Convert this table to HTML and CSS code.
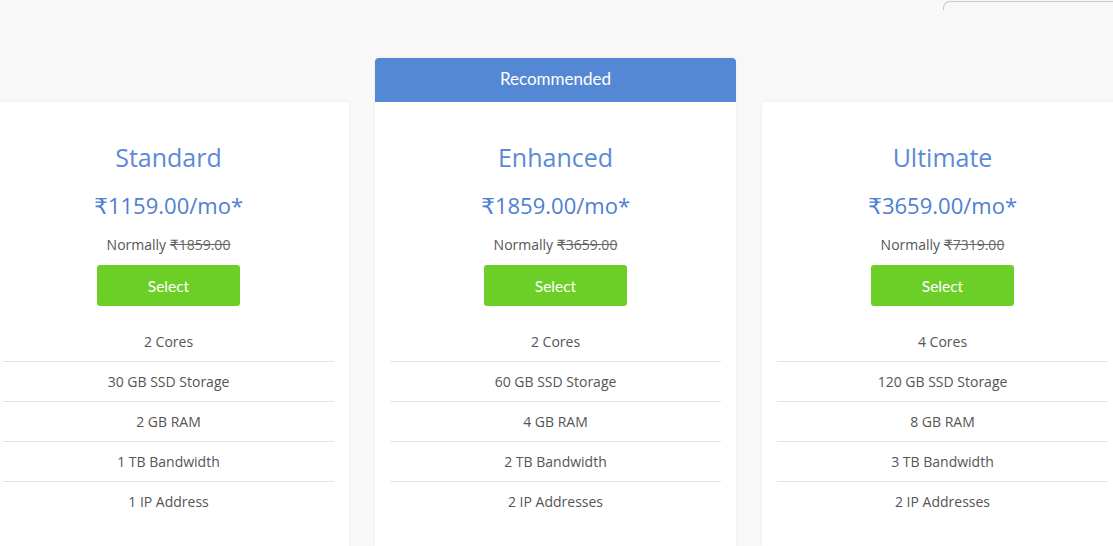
FILE: index.html
```html
<!DOCTYPE html>
<html lang="en">
<head>
<meta charset="utf-8">
<title>Plans</title>
<link rel="stylesheet" href="styles.css">
</head>
<body>
<div class="corner-box"></div>
<div class="plans">
  <div class="plan">
    <div class="plan-body">
      <h2 class="plan-name">Standard</h2>
      <div class="plan-price">₹1159.00/mo*</div>
      <div class="plan-normal">Normally <s>₹1859.00</s></div>
      <button class="select-btn">Select</button>
      <ul class="features">
        <li>2 Cores</li>
        <li>30 GB SSD Storage</li>
        <li>2 GB RAM</li>
        <li>1 TB Bandwidth</li>
        <li>1 IP Address</li>
      </ul>
    </div>
  </div>
  <div class="plan plan-featured">
    <div class="plan-banner">Recommended</div>
    <div class="plan-body">
      <h2 class="plan-name">Enhanced</h2>
      <div class="plan-price">₹1859.00/mo*</div>
      <div class="plan-normal">Normally <s>₹3659.00</s></div>
      <button class="select-btn">Select</button>
      <ul class="features">
        <li>2 Cores</li>
        <li>60 GB SSD Storage</li>
        <li>4 GB RAM</li>
        <li>2 TB Bandwidth</li>
        <li>2 IP Addresses</li>
      </ul>
    </div>
  </div>
  <div class="plan">
    <div class="plan-body">
      <h2 class="plan-name">Ultimate</h2>
      <div class="plan-price">₹3659.00/mo*</div>
      <div class="plan-normal">Normally <s>₹7319.00</s></div>
      <button class="select-btn">Select</button>
      <ul class="features">
        <li>4 Cores</li>
        <li>120 GB SSD Storage</li>
        <li>8 GB RAM</li>
        <li>3 TB Bandwidth</li>
        <li>2 IP Addresses</li>
      </ul>
    </div>
  </div>
</div>
</body>
</html>
```

FILE: styles.css
```css
html, body {
  margin: 0;
  padding: 0;
  background: #f8f8f8;
  overflow: hidden;
  height: 546px;
}
body {
  font-family: "Open Sans", "DejaVu Sans", sans-serif;
  color: #555;
  position: relative;
}
.corner-box {
  position: absolute;
  top: 1px;
  left: 943px;
  width: 200px;
  height: 8px;
  border-top: 1px solid #c8c8c8;
  border-left: 1px solid #c8c8c8;
  border-top-left-radius: 7px;
}
.plans {
  display: flex;
  gap: 26px;
  margin-left: -12px;
  padding-top: 58px;
  align-items: flex-start;
}
.plan {
  flex: 0 0 361px;
  margin-top: 44px;
  background: #fff;
  border-radius: 4px 4px 0 0;
  box-shadow: 0 0 3px rgba(0,0,0,0.06);
  height: 444px;
}
.plan-featured {
  margin-top: 0;
  height: 488px;
}
.plan-banner {
  height: 44px;
  background: #5588d4;
  color: #fff;
  border-radius: 4px 4px 0 0;
  font-family: Lato, "Open Sans", sans-serif;
  font-size: 17px;
  line-height: 42px;
  text-align: center;
}
.plan-body {
  padding: 37px 15px 0;
  text-align: center;
}
.plan-name {
  margin: 0;
  font-weight: 400;
  font-size: 25px;
  line-height: 36px;
  color: #5b8ad6;
}
.plan-price {
  margin-top: 15px;
  font-size: 22px;
  line-height: 30px;
  color: #4e80d1;
}
.plan-normal {
  margin-top: 15px;
  font-size: 14px;
  line-height: 20px;
  color: #555;
}
.plan-normal s {
  color: #666;
}
.select-btn {
  display: block;
  margin: 10px auto 0;
  width: 143px;
  height: 41px;
  border: 0;
  border-radius: 3px;
  background: #6ccf27;
  color: #fff;
  font-family: Lato, "Open Sans", sans-serif;
  font-size: 15.5px;
  line-height: 38px;
  cursor: pointer;
}
.features {
  list-style: none;
  margin: 16px 0 0;
  padding: 0;
}
.features li {
  height: 40px;
  line-height: 40px;
  font-size: 14px;
  color: #555;
  border-bottom: 1px solid #e4e4e4;
  box-sizing: border-box;
}
.features li:first-child {
  line-height: 39px;
}
.features li:last-child {
  border-bottom: 0;
}
```
